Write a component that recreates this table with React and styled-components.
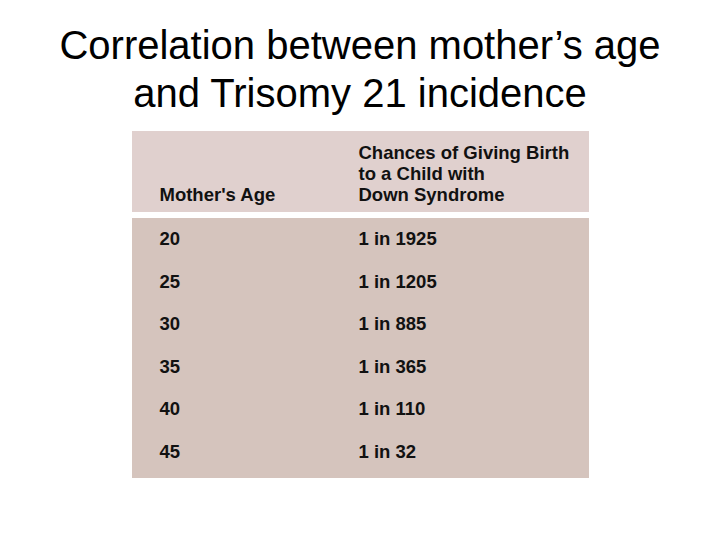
import React from 'react';
import styled, { createGlobalStyle } from 'styled-components';

const GlobalStyle = createGlobalStyle`
  body {
    margin: 0;
    background: #ffffff;
    font-family: 'Liberation Sans', Arial, sans-serif;
  }
`;

const Slide = styled.div`
  width: 720px;
  height: 540px;
  display: flex;
  flex-direction: column;
  align-items: center;
`;

const Title = styled.h1`
  margin: 21px 0 0;
  font-size: 40px;
  font-weight: 400;
  line-height: 48px;
  text-align: center;
  color: #000;
`;

const Table = styled.div`
  margin-top: 14px;
  width: 457px;
  display: flex;
  flex-direction: column;
  gap: 6px;
  font-weight: 700;
  font-size: 18.5px;
  color: #111;
`;

const Header = styled.div`
  height: 81px;
  box-sizing: border-box;
  background: #e0d0ce;
  display: grid;
  grid-template-columns: 199px 1fr;
  align-items: end;
  padding: 0 0 7px 28px;
  line-height: 21px;
`;

const Body = styled.div`
  background: #d5c4bd;
  padding-bottom: 5px;
`;

const Row = styled.div`
  height: 42.5px;
  display: grid;
  grid-template-columns: 199px 1fr;
  align-items: center;
  padding-left: 28px;
`;

const rows = [
  ['20', '1 in 1925'],
  ['25', '1 in 1205'],
  ['30', '1 in 885'],
  ['35', '1 in 365'],
  ['40', '1 in 110'],
  ['45', '1 in 32'],
];

const App = () => (
  <>
    <GlobalStyle />
    <Slide>
      <Title>
        Correlation between mother’s age
        <br />
        and Trisomy 21 incidence
      </Title>
      <Table>
        <Header>
          <div>Mother's Age</div>
          <div>
            Chances of Giving Birth
            <br />
            to a Child with
            <br />
            Down Syndrome
          </div>
        </Header>
        <Body>
          {rows.map(([age, chance]) => (
            <Row key={age}>
              <div>{age}</div>
              <div>{chance}</div>
            </Row>
          ))}
        </Body>
      </Table>
    </Slide>
  </>
);

export default App;
